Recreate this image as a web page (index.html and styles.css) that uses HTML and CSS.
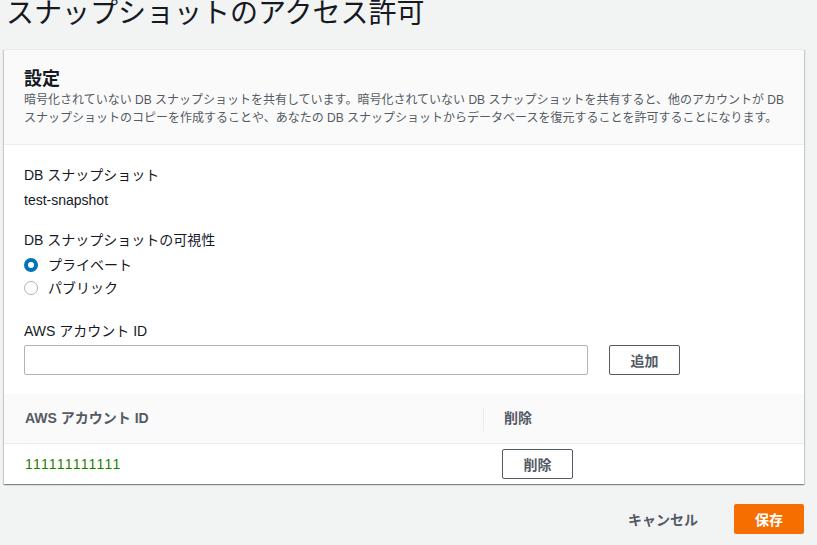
FILE: index.html
```html
<!DOCTYPE html>
<html lang="ja">
<head>
  <meta charset="UTF-8">
  <meta name="viewport" content="width=device-width, initial-scale=1.0">
  <title>スナップショットのアクセス許可</title>
  <link rel="stylesheet" href="styles.css">
</head>
<body>

  <div class="page">
    <h1 class="page-title">スナップショットのアクセス許可</h1>

    <div class="card">
      <div class="card-header">
        <h2>設定</h2>
        <p>暗号化されていない DB スナップショットを共有しています。暗号化されていない DB スナップショットを共有すると、他のアカウントが DB スナップショットのコピーを作成することや、あなたの DB スナップショットからデータベースを復元することを許可することになります。</p>
      </div>

      <div class="card-body">
        <div class="field">
          <div class="field-label">DB スナップショット</div>
          <div class="field-value">test-snapshot</div>
        </div>

        <div class="field radios">
          <div class="field-label">DB スナップショットの可視性</div>
          <label class="radio-row">
            <span class="radio checked"></span>
            <span>プライベート</span>
          </label>
          <label class="radio-row">
            <span class="radio"></span>
            <span>パブリック</span>
          </label>
        </div>

        <div class="field last">
          <div class="field-label">AWS アカウント ID</div>
          <div class="input-row">
            <input type="text" class="text-input">
            <button class="btn">追加</button>
          </div>
        </div>
      </div>

      <table class="accounts">
        <thead>
          <tr>
            <th class="col-id">AWS アカウント ID</th>
            <th class="col-del"><span class="divider"></span>削除</th>
          </tr>
        </thead>
        <tbody>
          <tr>
            <td class="account-id">111111111111</td>
            <td class="col-del-cell"><button class="btn">削除</button></td>
          </tr>
        </tbody>
      </table>
    </div>

    <div class="footer">
      <button class="btn-link">キャンセル</button>
      <button class="btn-primary">保存</button>
    </div>
  </div>

</body>
</html>
```

FILE: styles.css
```css
* {
  margin: 0;
  padding: 0;
  box-sizing: border-box;
}

body {
  font-family: 'Liberation Sans', 'Noto Sans CJK JP', sans-serif;
  background-color: #f2f3f3;
  color: #16191f;
  font-size: 14px;
  line-height: 22px;
}

.page {
  width: 800px;
  margin-left: 4px;
}

.page-title {
  font-size: 28px;
  font-weight: 400;
  line-height: 30px;
  margin-top: -1px;
  margin-left: 2px;
  margin-bottom: 20px;
  color: #16191f;
}

.card {
  background: #fff;
  box-shadow: 0 1px 1px 0 rgba(0, 28, 36, 0.3), 1px 1px 1px 0 rgba(0, 28, 36, 0.15), -1px 1px 1px 0 rgba(0, 28, 36, 0.15);
  border-top: 1px solid #eaeded;
}

.card-header {
  background: #fafafa;
  border-bottom: 1px solid #eaeded;
  padding: 17px 20px 17px;
}

.card-header h2 {
  font-size: 18px;
  font-weight: 700;
  line-height: 24px;
  color: #16191f;
}

.card-header p {
  font-size: 12px;
  line-height: 18px;
  color: #545b64;
}

.card-body {
  padding: 19px 20px 19px;
}

.field {
  margin-bottom: 18px;
}

.field.radios {
  margin-bottom: 21px;
}

.field.last {
  margin-bottom: 0;
}

.field-label {
  margin-bottom: 3px;
}

.radios .field-label {
  margin-bottom: 2px;
}

.field-value {
  color: #16191f;
}

.radio-row {
  display: flex;
  align-items: center;
  height: 23px;
}

.radio {
  width: 14px;
  height: 14px;
  border-radius: 50%;
  border: 1px solid #aab7b8;
  background: #fff;
  margin-right: 10px;
}

.radio.checked {
  border: 4px solid #0073bb;
}

.input-row {
  display: flex;
  align-items: center;
  gap: 21px;
}

.text-input {
  width: 564px;
  height: 30px;
  border: 1px solid #aab7b8;
  border-radius: 2px;
  background: #fff;
}

.btn {
  height: 30px;
  width: 71px;
  border: 1px solid #545b64;
  border-radius: 2px;
  background: #fff;
  color: #545b64;
  font-family: inherit;
  font-size: 14px;
  font-weight: 700;
  cursor: pointer;
}

.accounts {
  width: 100%;
  border-collapse: collapse;
  font-size: 14px;
}

.accounts th {
  background: #fafafa;
  text-align: left;
  font-weight: 700;
  color: #545b64;
  height: 49px;
  border-bottom: 1px solid #eaeded;
  padding: 0 20px;
}

.accounts th.col-id {
  width: 479px;
  padding-left: 21px;
}

.accounts th.col-del {
  position: relative;
  padding-left: 21px;
}

.divider {
  position: absolute;
  left: 0;
  top: 13px;
  width: 1px;
  height: 24px;
  background: #eaeded;
}

.accounts td {
  height: 41px;
  padding: 0 20px;
}

.accounts td.account-id {
  color: #1d8102;
  letter-spacing: 1.2px;
  padding-left: 21px;
}

.accounts td.col-del-cell {
  padding-left: 19px;
}

.footer {
  display: flex;
  justify-content: flex-end;
  align-items: center;
  margin-top: 20px;
  gap: 16px;
}

.btn-link {
  border: none;
  background: none;
  color: #545b64;
  font-family: inherit;
  font-size: 14px;
  font-weight: 700;
  padding: 0 20px;
  height: 30px;
  cursor: pointer;
}

.btn-primary {
  width: 70px;
  height: 30px;
  border: none;
  border-radius: 2px;
  background: #f76e00;
  color: #fff;
  font-family: inherit;
  font-size: 14px;
  font-weight: 700;
  cursor: pointer;
}
```
